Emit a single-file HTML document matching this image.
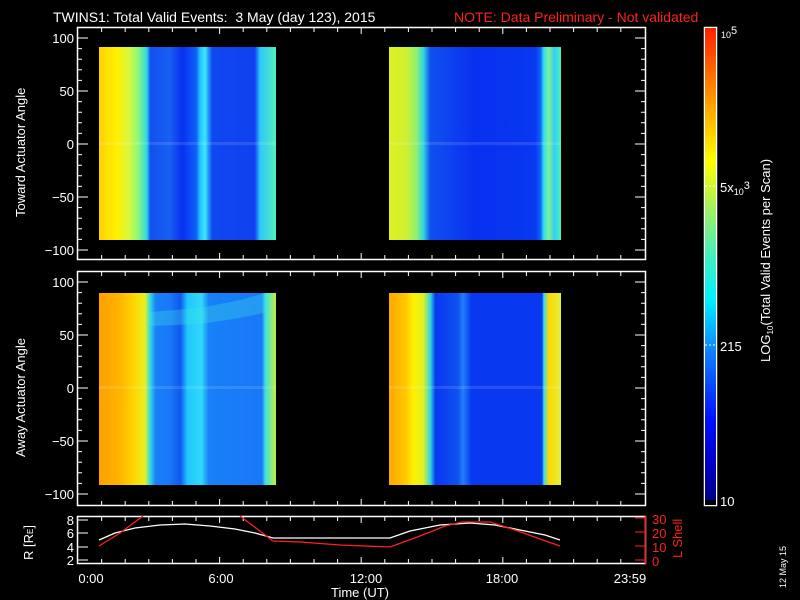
<!DOCTYPE html>
<html><head><meta charset="utf-8"><style>
html,body{margin:0;padding:0;background:#000;}
svg{display:block;font-family:"Liberation Sans",sans-serif;}
</style></head><body>
<svg width="800" height="600" viewBox="0 0 800 600" xmlns="http://www.w3.org/2000/svg">
<defs>
<linearGradient id="a1" x1="0" x2="1" y1="0" y2="0">
<stop offset="0" stop-color="#ffd200"/><stop offset="0.1" stop-color="#fff000"/>
<stop offset="0.17" stop-color="#d8f840"/><stop offset="0.22" stop-color="#90f878"/>
<stop offset="0.27" stop-color="#30d8e0"/><stop offset="0.29" stop-color="#1050f0"/>
<stop offset="0.4" stop-color="#1860f0"/><stop offset="0.47" stop-color="#0830f0"/>
<stop offset="0.55" stop-color="#1060f8"/><stop offset="0.57" stop-color="#20c0ff"/>
<stop offset="0.6" stop-color="#40e8f8"/><stop offset="0.62" stop-color="#2090ff"/>
<stop offset="0.64" stop-color="#1048f0"/><stop offset="0.88" stop-color="#1040f0"/>
<stop offset="0.91" stop-color="#30c8f8"/><stop offset="1" stop-color="#50f0c0"/>
</linearGradient>
<linearGradient id="a2" x1="0" x2="1" y1="0" y2="0">
<stop offset="0" stop-color="#e0f020"/><stop offset="0.1" stop-color="#d0f030"/>
<stop offset="0.16" stop-color="#90f070"/><stop offset="0.2" stop-color="#30d8e0"/>
<stop offset="0.24" stop-color="#1050f0"/><stop offset="0.5" stop-color="#0830f0"/>
<stop offset="0.85" stop-color="#0838f0"/><stop offset="0.88" stop-color="#1060f8"/>
<stop offset="0.9" stop-color="#30e0f0"/><stop offset="0.93" stop-color="#80f090"/>
<stop offset="0.96" stop-color="#30d0f0"/><stop offset="1" stop-color="#50f0c0"/>
</linearGradient>
<linearGradient id="b1" x1="0" x2="1" y1="0" y2="0">
<stop offset="0" stop-color="#ffa000"/><stop offset="0.12" stop-color="#ffb400"/>
<stop offset="0.2" stop-color="#ffd800"/><stop offset="0.26" stop-color="#e8f020"/>
<stop offset="0.29" stop-color="#30d8e8"/><stop offset="0.32" stop-color="#1880f8"/>
<stop offset="0.4" stop-color="#1878f8"/><stop offset="0.46" stop-color="#1058f0"/>
<stop offset="0.5" stop-color="#20c8ff"/><stop offset="0.58" stop-color="#30d8f8"/>
<stop offset="0.62" stop-color="#1880f8"/><stop offset="0.92" stop-color="#1878f8"/>
<stop offset="0.94" stop-color="#40e0e0"/><stop offset="1" stop-color="#c0f040"/>
</linearGradient>
<linearGradient id="b2" x1="0" x2="1" y1="0" y2="0">
<stop offset="0" stop-color="#ffa800"/><stop offset="0.1" stop-color="#ffc800"/>
<stop offset="0.14" stop-color="#fff000"/><stop offset="0.2" stop-color="#e0f020"/>
<stop offset="0.24" stop-color="#30d8e0"/><stop offset="0.27" stop-color="#0838f0"/>
<stop offset="0.4" stop-color="#1050f0"/><stop offset="0.43" stop-color="#2080f8"/>
<stop offset="0.48" stop-color="#0838f0"/><stop offset="0.89" stop-color="#0838f0"/>
<stop offset="0.9" stop-color="#30e0f0"/><stop offset="0.93" stop-color="#ffd800"/>
<stop offset="1" stop-color="#e0f040"/>
</linearGradient>
<linearGradient id="cb" x1="0" x2="0" y1="1" y2="0">
<stop offset="0" stop-color="#000080"/><stop offset="0.08" stop-color="#0000c0"/>
<stop offset="0.18" stop-color="#0010ff"/><stop offset="0.32" stop-color="#1080ff"/>
<stop offset="0.43" stop-color="#00f0ff"/><stop offset="0.52" stop-color="#40f0c0"/>
<stop offset="0.62" stop-color="#a0f060"/><stop offset="0.72" stop-color="#ffff00"/>
<stop offset="0.84" stop-color="#ffa000"/><stop offset="1" stop-color="#ff2000"/>
</linearGradient>
</defs>

<text x="53" y="22" fill="#fff" font-size="14" xml:space="preserve">TWINS1: Total Valid Events:  3 May (day 123), 2015</text>
<text x="454" y="22" fill="#ff2020" font-size="14">NOTE: Data Preliminary - Not validated</text>

<rect x="99" y="47" width="177" height="193" fill="url(#a1)"/>
<rect x="389" y="47" width="172" height="193" fill="url(#a2)"/>
<rect x="99" y="142" width="177" height="3" fill="#fff" opacity="0.12"/>
<rect x="389" y="142" width="172" height="3" fill="#fff" opacity="0.12"/>
<rect x="99" y="293" width="177" height="192" fill="url(#b1)"/>
<rect x="389" y="293" width="172" height="192" fill="url(#b2)"/>
<polygon points="150,312 200,308 240,300 262,294 268,294 268,312 240,318 200,324 150,326" fill="#40e8e0" opacity="0.3"/>
<rect x="99" y="386" width="177" height="3" fill="#fff" opacity="0.12"/>
<rect x="389" y="386" width="172" height="3" fill="#fff" opacity="0.12"/>

<g stroke="#fff" stroke-width="1.5" fill="none">
<rect x="77.5" y="27.5" width="568" height="232"/>
<rect x="77.5" y="271.5" width="568" height="234"/>
<rect x="77.5" y="516.5" width="568" height="47"/>
<rect x="704.5" y="27.5" width="12" height="478"/>
</g>
<rect x="705" y="28" width="11" height="477" fill="url(#cb)"/>
<rect x="705" y="500" width="11" height="5" fill="#000"/>

<g stroke="#fff" stroke-width="1">
<path d="M78 38h10M78 91h10M78 144h10M78 197h10M78 250h10 M78 48.6h4M78 59.2h4M78 69.8h4M78 80.4h4M78 101.6h4M78 112.2h4M78 122.8h4M78 133.4h4M78 154.6h4M78 165.2h4M78 175.8h4M78 186.4h4M78 207.6h4M78 218.2h4M78 228.8h4M78 239.4h4"/>
<path d="M645 38h-10M645 91h-10M645 144h-10M645 197h-10M645 250h-10 M645 48.6h-4M645 59.2h-4M645 69.8h-4M645 80.4h-4M645 101.6h-4M645 112.2h-4M645 122.8h-4M645 133.4h-4M645 154.6h-4M645 165.2h-4M645 175.8h-4M645 186.4h-4M645 207.6h-4M645 218.2h-4M645 228.8h-4M645 239.4h-4"/>
<g transform="translate(0,244)">
<path d="M78 38h10M78 91h10M78 144h10M78 197h10M78 250h10 M78 48.6h4M78 59.2h4M78 69.8h4M78 80.4h4M78 101.6h4M78 112.2h4M78 122.8h4M78 133.4h4M78 154.6h4M78 165.2h4M78 175.8h4M78 186.4h4M78 207.6h4M78 218.2h4M78 228.8h4M78 239.4h4"/>
<path d="M645 38h-10M645 91h-10M645 144h-10M645 197h-10M645 250h-10 M645 48.6h-4M645 59.2h-4M645 69.8h-4M645 80.4h-4M645 101.6h-4M645 112.2h-4M645 122.8h-4M645 133.4h-4M645 154.6h-4M645 165.2h-4M645 175.8h-4M645 186.4h-4M645 207.6h-4M645 218.2h-4M645 228.8h-4M645 239.4h-4"/>
</g>
<path d="M101.6 28v4M125.2 28v4M148.8 28v4M172.4 28v4M196 28v4M219.6 28v6M243.2 28v4M266.8 28v4M290.4 28v4M314 28v4M337.6 28v4M361.2 28v6M384.8 28v4M408.4 28v4M432 28v4M455.6 28v4M479.2 28v4M502.8 28v6M526.4 28v4M550 28v4M573.6 28v4M597.2 28v4M620.8 28v4"/>
<path d="M101.6 259v-4M125.2 259v-4M148.8 259v-4M172.4 259v-4M196 259v-4M219.6 259v-6M243.2 259v-4M266.8 259v-4M290.4 259v-4M314 259v-4M337.6 259v-4M361.2 259v-6M384.8 259v-4M408.4 259v-4M432 259v-4M455.6 259v-4M479.2 259v-4M502.8 259v-6M526.4 259v-4M550 259v-4M573.6 259v-4M597.2 259v-4M620.8 259v-4"/>
<path d="M101.6 272v4M125.2 272v4M148.8 272v4M172.4 272v4M196 272v4M219.6 272v6M243.2 272v4M266.8 272v4M290.4 272v4M314 272v4M337.6 272v4M361.2 272v6M384.8 272v4M408.4 272v4M432 272v4M455.6 272v4M479.2 272v4M502.8 272v6M526.4 272v4M550 272v4M573.6 272v4M597.2 272v4M620.8 272v4"/>
<path d="M101.6 505v-4M125.2 505v-4M148.8 505v-4M172.4 505v-4M196 505v-4M219.6 505v-6M243.2 505v-4M266.8 505v-4M290.4 505v-4M314 505v-4M337.6 505v-4M361.2 505v-6M384.8 505v-4M408.4 505v-4M432 505v-4M455.6 505v-4M479.2 505v-4M502.8 505v-6M526.4 505v-4M550 505v-4M573.6 505v-4M597.2 505v-4M620.8 505v-4"/>
<path d="M101.6 517v4M125.2 517v4M148.8 517v4M172.4 517v4M196 517v4M219.6 517v6M243.2 517v4M266.8 517v4M290.4 517v4M314 517v4M337.6 517v4M361.2 517v6M384.8 517v4M408.4 517v4M432 517v4M455.6 517v4M479.2 517v4M502.8 517v6M526.4 517v4M550 517v4M573.6 517v4M597.2 517v4M620.8 517v4"/>
<path d="M101.6 563v-4M125.2 563v-4M148.8 563v-4M172.4 563v-4M196 563v-4M219.6 563v-6M243.2 563v-4M266.8 563v-4M290.4 563v-4M314 563v-4M337.6 563v-4M361.2 563v-6M384.8 563v-4M408.4 563v-4M432 563v-4M455.6 563v-4M479.2 563v-4M502.8 563v-6M526.4 563v-4M550 563v-4M573.6 563v-4M597.2 563v-4M620.8 563v-4"/>
<path d="M78 520h10M78 533h10M78 547h10M78 560h10"/>
</g>
<path d="M645 518h-10M645 532h-10M645 546h-10M645 560h-10" stroke="#ff2020"/>
<path d="M645.5 516v48" stroke="#ff2020" stroke-width="1.5"/>
<path d="M705 186h10M705 345h10" stroke="#fff" stroke-dasharray="2 2"/>

<g fill="#fff" font-size="13" text-anchor="end">
<text x="74" y="43">100</text><text x="74" y="96">50</text><text x="74" y="149">0</text>
<text x="74" y="202">−50</text><text x="74" y="255">−100</text>
<text x="74" y="287">100</text><text x="74" y="340">50</text><text x="74" y="393">0</text>
<text x="74" y="446">−50</text><text x="74" y="499">−100</text>
<text x="74" y="525">8</text><text x="74" y="538">6</text><text x="74" y="552">4</text><text x="74" y="565">2</text>
</g>
<g fill="#ff2020" font-size="13">
<text x="652" y="524">30</text><text x="652" y="538">20</text><text x="652" y="552">10</text><text x="652" y="566">0</text>
<text transform="translate(682,558) rotate(-90)">L Shell</text>
</g>
<g fill="#fff" font-size="13" text-anchor="middle">
<text x="91" y="583">0:00</text><text x="221" y="583">6:00</text><text x="366" y="583">12:00</text>
<text x="502" y="583">18:00</text><text x="630" y="583">23:59</text>
<text x="360" y="597">Time (UT)</text>
</g>
<g fill="#fff" font-size="13">
<text transform="translate(25,217) rotate(-90)">Toward Actuator Angle</text>
<text transform="translate(25,457) rotate(-90)">Away Actuator Angle</text>
<text transform="translate(33,560) rotate(-90)">R [R<tspan font-size="8">E</tspan>]</text>
<text x="721" y="38" font-size="9">10<tspan font-size="11" dy="-4">5</tspan></text>
<text x="720" y="192">5x<tspan font-size="9" dy="3">10</tspan><tspan font-size="11" dy="-6">3</tspan></text>
<text x="720" y="351">215</text>
<text x="720" y="506">10</text>
<text transform="translate(770,362) rotate(-90)">LOG<tspan font-size="8" dy="3">10</tspan><tspan dy="-3">(Total Valid Events per Scan)</tspan></text>
<text transform="translate(786,588) rotate(-90)" font-size="9">12 May 15</text>
</g>

<polyline fill="none" stroke="#fff" stroke-width="1.3" points="99,540 115,533 135,528 160,525 185,524 210,526 235,529 255,533 273,538 390,538 410,531 440,525 470,523 495,525 520,530 545,535 560,540"/>
<polyline fill="none" stroke="#ff2020" stroke-width="1.3" points="99,546 120,533 143,516"/>
<polyline fill="none" stroke="#ff2020" stroke-width="1.3" points="240,516 273,541 300,542 340,545 390,547 420,536 445,526 462,522 490,522 515,530 540,539 560,546"/>
</svg>
</body></html>
